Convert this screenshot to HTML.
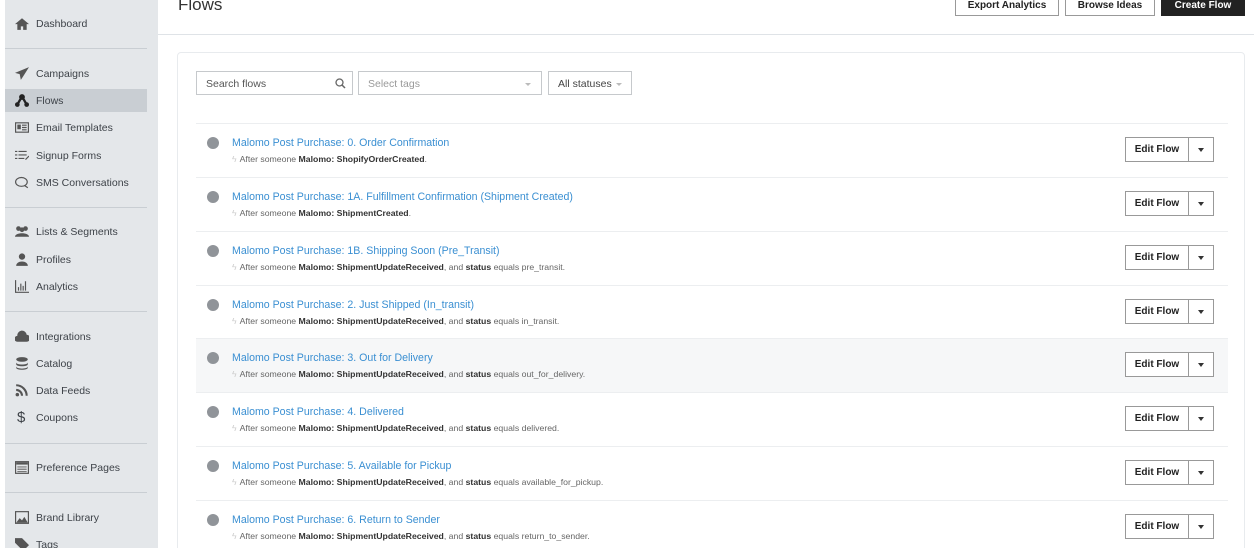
<!DOCTYPE html>
<html style="overflow:hidden;width:1254px;height:548px"><head><meta charset="utf-8"><style>
*{box-sizing:border-box;margin:0;padding:0}
body{width:1254px;height:548px;overflow:hidden;background:#fff;font-family:"Liberation Sans",Arial,sans-serif;position:relative;color:#333}
.sb{position:absolute;left:5px;top:0;width:153px;height:548px;background:#e4e7ea}
.it{position:absolute;left:0;width:142px;height:23px;font-size:10.5px;color:#3d4248;line-height:25px;padding-left:31px}
.it.act{background:#c9ced3}
.ic{position:absolute;left:10px;top:5px;width:14px;height:13px}
.sep{position:absolute;left:0;width:142px;height:1px;background:#c9ced3}
.hdr{position:absolute;left:158px;top:34px;width:1096px;height:1px;background:#dfe3e7}
h1{position:absolute;left:178px;top:-5px;font-weight:normal;font-size:17px;color:#333}
.btn{position:absolute;top:-4px;height:20px;border:1px solid #999;background:#fff;font-size:10px;font-weight:bold;text-align:center;line-height:17px;color:#222}
.card{position:absolute;left:177px;top:52px;width:1068px;height:520px;border:1px solid #e8ebee;border-radius:4px}
.inp{position:absolute;top:71px;height:24px;border:1px solid #c6c9cc;font-size:10.5px;line-height:24px;padding-left:9px;color:#555}
.row{position:absolute;left:196px;width:1032px;height:54px;border-top:1px solid #eceef0}
.row.hl{background:#f6f7f8}
.dot{position:absolute;left:11px;top:13px;width:12px;height:12px;border-radius:50%;background:#909499}
.t{position:absolute;left:36px;top:13px;font-size:10.6px;color:#3a8fd2}
.s{position:absolute;left:36px;top:30px;font-size:8.7px;color:#666}
.s b{color:#333}
.s i{color:#ccc;font-style:normal;margin-right:3px}
.ef{position:absolute;left:929px;top:13px;width:64px;height:25px;border:1px solid #999;font-size:10px;font-weight:bold;text-align:center;line-height:24px;color:#222;background:#fff}
.cr{position:absolute;left:992px;top:13px;width:26px;height:25px;border:1px solid #999;background:#fff}
.cr:after{content:"";position:absolute;left:9px;top:10px;border:3.5px solid transparent;border-top:4px solid #333}
</style></head><body>
<div class="sb">
<div class="it" style="top:12px"><svg class="ic" viewBox="0 0 12 11"><path d="M6 1L0 6h2v5h3V8h2v3h3V6h2z" fill="#555"/></svg>Dashboard</div>
<div class="sep" style="top:48px"></div>
<div class="it" style="top:62px"><svg class="ic" viewBox="0 0 12 11"><path d="M12 0L0 5l4 1 1 5 2-3z" fill="#555"/></svg>Campaigns</div>
<div class="it act" style="top:89px"><svg class="ic" viewBox="0 0 12 11"><circle cx="6" cy="2.5" r="2.5" fill="#222"/><circle cx="2" cy="9" r="2" fill="#222"/><circle cx="10" cy="9" r="2" fill="#222"/><path d="M6 2L2 9M6 2l4 7" stroke="#222" stroke-width="2"/></svg>Flows</div>
<div class="it" style="top:116px"><svg class="ic" viewBox="0 0 12 11"><rect x=".5" y="1.5" width="11" height="8" fill="none" stroke="#555"/><rect x="2" y="3" width="3" height="4" fill="#555"/><path d="M6 3.5h4M6 5.5h4M6 7.5h4" stroke="#555"/></svg>Email Templates</div>
<div class="it" style="top:144px"><svg class="ic" viewBox="0 0 12 11"><path d="M0 2h2M3 2h7M0 5h2M3 5h7M0 8h2M3 8h5M9 9l3-3" stroke="#555"/></svg>Signup Forms</div>
<div class="it" style="top:171px"><svg class="ic" viewBox="0 0 12 11"><ellipse cx="5.5" cy="5" rx="5" ry="3.8" fill="none" stroke="#555"/><path d="M8 8l3 2" stroke="#555"/></svg>SMS Conversations</div>
<div class="sep" style="top:207px"></div>
<div class="it" style="top:220px"><svg class="ic" viewBox="0 0 12 11"><circle cx="3" cy="3" r="2" fill="#555"/><circle cx="9" cy="3" r="2" fill="#555"/><circle cx="6" cy="4" r="2" fill="#555"/><path d="M0 10c0-4 12-4 12 0z" fill="#555"/></svg>Lists &amp; Segments</div>
<div class="it" style="top:248px"><svg class="ic" viewBox="0 0 12 11"><circle cx="6" cy="3" r="2.7" fill="#555"/><path d="M1 11c0-5 10-5 10 0z" fill="#555"/></svg>Profiles</div>
<div class="it" style="top:275px"><svg class="ic" viewBox="0 0 12 11"><path d="M.5 0v10.5H12M3 9V6M5 9V3M7 9V5M9 9V1" stroke="#555" fill="none"/></svg>Analytics</div>
<div class="sep" style="top:311px"></div>
<div class="it" style="top:325px"><svg class="ic" viewBox="0 0 12 11"><path d="M2 10a2.5 2.5 0 010-5 4 4 0 018-1 3 3 0 010 6z" fill="#555"/></svg>Integrations</div>
<div class="it" style="top:352px"><svg class="ic" viewBox="0 0 12 11"><ellipse cx="6" cy="2" rx="5" ry="2" fill="#555"/><path d="M1 4.5c0 2.5 10 2.5 10 0v1.5c0 2.5-10 2.5-10 0zM1 8c0 2.5 10 2.5 10 0v1c0 2.5-10 2.5-10 0z" fill="#555"/></svg>Catalog</div>
<div class="it" style="top:379px"><svg class="ic" viewBox="0 0 12 11"><circle cx="2" cy="9" r="1.5" fill="#555"/><path d="M1 5a5 5 0 015 5M1 1a9 9 0 019 9" stroke="#555" stroke-width="1.8" fill="none"/></svg>Data Feeds</div>
<div class="it" style="top:406px"><span style="position:absolute;left:12px;font-size:15px;top:-1px">$</span>Coupons</div>
<div class="sep" style="top:443px"></div>
<div class="it" style="top:456px"><svg class="ic" viewBox="0 0 12 11"><rect x=".5" y=".5" width="11" height="10" fill="none" stroke="#555"/><rect x="1" y="1" width="10" height="2" fill="#555"/><path d="M2 5h8M2 7h8M2 9h8" stroke="#777"/></svg>Preference Pages</div>
<div class="sep" style="top:492px"></div>
<div class="it" style="top:506px"><svg class="ic" viewBox="0 0 12 11"><rect x=".5" y=".5" width="11" height="10" fill="none" stroke="#555"/><path d="M1 10l3-4 2 2 2-3 3 5z" fill="#555"/></svg>Brand Library</div>
<div class="it" style="top:533px"><svg class="ic" viewBox="0 0 12 11"><path d="M0 0h6l6 6-5 5-7-7z" fill="#555"/></svg>Tags</div>
</div>
<h1>Flows</h1>
<div class="btn" style="left:955px;width:104px">Export Analytics</div>
<div class="btn" style="left:1065px;width:90px">Browse Ideas</div>
<div class="btn" style="left:1161px;width:84px;background:#222;color:#fff;border-color:#222">Create Flow</div>
<div class="hdr"></div>
<div class="card"></div>
<div class="inp" style="left:196px;width:157px">Search flows<svg style="position:absolute;right:6px;top:6px" width="11" height="11" viewBox="0 0 11 11"><circle cx="4.5" cy="4.5" r="3.5" fill="none" stroke="#666" stroke-width="1.3"/><path d="M7 7l3 3" stroke="#666" stroke-width="1.5"/></svg></div>
<div class="inp" style="left:358px;width:184px;color:#999">Select tags<span style="position:absolute;right:10px;top:11px;border:3px solid transparent;border-top:3px solid #bbb"></span></div>
<div class="inp" style="left:548px;width:84px;color:#444">All statuses<span style="position:absolute;right:9px;top:11px;border:3px solid transparent;border-top:3px solid #bbb"></span></div>

<div class="row" style="top:123px"><div class="dot"></div><div class="t">Malomo Post Purchase: 0. Order Confirmation</div><div class="s"><i>ϟ</i>After someone <b>Malomo: ShopifyOrderCreated</b>.</div><div class="ef">Edit Flow</div><div class="cr"></div></div>
<div class="row" style="top:177px"><div class="dot"></div><div class="t">Malomo Post Purchase: 1A. Fulfillment Confirmation (Shipment Created)</div><div class="s"><i>ϟ</i>After someone <b>Malomo: ShipmentCreated</b>.</div><div class="ef">Edit Flow</div><div class="cr"></div></div>
<div class="row" style="top:231px"><div class="dot"></div><div class="t">Malomo Post Purchase: 1B. Shipping Soon (Pre_Transit)</div><div class="s"><i>ϟ</i>After someone <b>Malomo: ShipmentUpdateReceived</b>, and <b>status</b> equals pre_transit.</div><div class="ef">Edit Flow</div><div class="cr"></div></div>
<div class="row" style="top:285px"><div class="dot"></div><div class="t">Malomo Post Purchase: 2. Just Shipped (In_transit)</div><div class="s"><i>ϟ</i>After someone <b>Malomo: ShipmentUpdateReceived</b>, and <b>status</b> equals in_transit.</div><div class="ef">Edit Flow</div><div class="cr"></div></div>
<div class="row hl" style="top:338px"><div class="dot"></div><div class="t">Malomo Post Purchase: 3. Out for Delivery</div><div class="s"><i>ϟ</i>After someone <b>Malomo: ShipmentUpdateReceived</b>, and <b>status</b> equals out_for_delivery.</div><div class="ef">Edit Flow</div><div class="cr"></div></div>
<div class="row" style="top:392px"><div class="dot"></div><div class="t">Malomo Post Purchase: 4. Delivered</div><div class="s"><i>ϟ</i>After someone <b>Malomo: ShipmentUpdateReceived</b>, and <b>status</b> equals delivered.</div><div class="ef">Edit Flow</div><div class="cr"></div></div>
<div class="row" style="top:446px"><div class="dot"></div><div class="t">Malomo Post Purchase: 5. Available for Pickup</div><div class="s"><i>ϟ</i>After someone <b>Malomo: ShipmentUpdateReceived</b>, and <b>status</b> equals available_for_pickup.</div><div class="ef">Edit Flow</div><div class="cr"></div></div>
<div class="row" style="top:500px"><div class="dot"></div><div class="t">Malomo Post Purchase: 6. Return to Sender</div><div class="s"><i>ϟ</i>After someone <b>Malomo: ShipmentUpdateReceived</b>, and <b>status</b> equals return_to_sender.</div><div class="ef">Edit Flow</div><div class="cr"></div></div>
</body></html>
